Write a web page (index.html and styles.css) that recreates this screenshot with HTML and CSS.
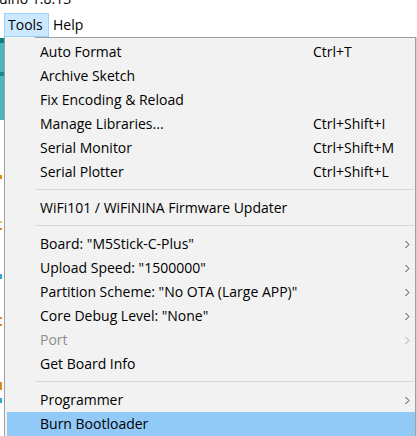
FILE: index.html
```html
<!DOCTYPE html>
<html>
<head>
<meta charset="utf-8">
<link rel="stylesheet" href="styles.css">
</head>
<body>
<div class="title"><span class="title-text">uino 1.8.13</span></div>
<div class="menubar">
  <span class="mb-item active">Tools</span>
  <span class="mb-item">Help</span>
</div>
<div class="stage">
  <div class="edge">
    <div class="teal-dark"></div>
    <div class="teal a"></div>
    <div class="teal-band"></div>
    <div class="teal b"></div>
    <div class="speck orange s1"></div>
    <div class="speck yellow s2"></div>
    <div class="speck orange s3"></div>
    <div class="speck cyan s4"></div>
    <div class="speck orange s5"></div>
    <div class="speck orange s6"></div>
    <div class="speck orange s7"></div>
    <div class="speck cyan s8"></div>
  </div>
  <div class="popup">
    <div class="topline"></div>
    <div class="items">
      <div class="row"><span class="label">Auto Format</span><span class="sc">Ctrl+T</span><span></span></div>
      <div class="row"><span class="label">Archive Sketch</span><span class="sc"></span><span></span></div>
      <div class="row"><span class="label">Fix Encoding &amp; Reload</span><span class="sc"></span><span></span></div>
      <div class="row"><span class="label">Manage Libraries...</span><span class="sc">Ctrl+Shift+I</span><span></span></div>
      <div class="row"><span class="label">Serial Monitor</span><span class="sc">Ctrl+Shift+M</span><span></span></div>
      <div class="row"><span class="label">Serial Plotter</span><span class="sc">Ctrl+Shift+L</span><span></span></div>
      <div class="sep"></div>
      <div class="row"><span class="label">WiFi101 / WiFiNINA Firmware Updater</span><span class="sc"></span><span></span></div>
      <div class="sep"></div>
      <div class="row"><span class="label">Board: "M5Stick-C-Plus"</span><span class="sc"></span><svg class="chev" width="6" height="9" viewBox="0 0 6 9"><path d="M1.5 1 L5 4.5 L1.5 8"/></svg></div>
      <div class="row"><span class="label">Upload Speed: "1500000"</span><span class="sc"></span><svg class="chev" width="6" height="9" viewBox="0 0 6 9"><path d="M1.5 1 L5 4.5 L1.5 8"/></svg></div>
      <div class="row"><span class="label">Partition Scheme: "No OTA (Large APP)"</span><span class="sc"></span><svg class="chev" width="6" height="9" viewBox="0 0 6 9"><path d="M1.5 1 L5 4.5 L1.5 8"/></svg></div>
      <div class="row"><span class="label">Core Debug Level: "None"</span><span class="sc"></span><svg class="chev" width="6" height="9" viewBox="0 0 6 9"><path d="M1.5 1 L5 4.5 L1.5 8"/></svg></div>
      <div class="row disabled"><span class="label">Port</span><span class="sc"></span><svg class="chev" width="6" height="9" viewBox="0 0 6 9"><path d="M1.5 1 L5 4.5 L1.5 8"/></svg></div>
      <div class="row"><span class="label">Get Board Info</span><span class="sc"></span><span></span></div>
      <div class="sep"></div>
      <div class="row"><span class="label">Programmer</span><span class="sc"></span><svg class="chev" width="6" height="9" viewBox="0 0 6 9"><path d="M1.5 1 L5 4.5 L1.5 8"/></svg></div>
      <div class="row hl"><span class="label">Burn Bootloader</span><span class="sc"></span><span></span></div>
    </div>
  </div>
</div>
</body>
</html>
```

FILE: styles.css
```css
html, body {
  margin: 0;
  padding: 0;
  background: #ffffff;
  height: 436px;
  overflow: hidden;
}
body {
  font-family: "Open Sans", "Noto Sans", sans-serif;
  font-size: 14px;
  color: #000;
}
.title {
  height: 13px;
  overflow: hidden;
  display: flex;
  align-items: flex-start;
}
.title-text {
  display: block;
  line-height: 14px;
  margin-top: -8px;
  margin-left: -1px;
  white-space: nowrap;
}
.menubar {
  height: 24px;
  display: flex;
  padding-left: 4px;
  align-items: stretch;
}
.mb-item {
  box-sizing: border-box;
  line-height: 22px;
  padding: 0 3px;
  border: 1px solid transparent;
}
.mb-item.active {
  width: 45px;
  background: #cce8ff;
  border-color: #99d1ff;
}
.stage {
  display: flex;
  height: 399px;
}
.edge {
  width: 4px;
  display: flex;
  flex-direction: column;
  flex: none;
}
.teal-dark { height: 5px; background: #0d7f83; margin-top: 1px; }
.teal { background: #4db5b9; }
.teal.a { height: 29px; }
.teal-band { height: 4px; background: #138b8f; }
.teal.b { height: 44px; }
.speck { width: 2px; height: 2px; }
.orange { background: #e08a1e; }
.yellow { background: #e6c34a; }
.cyan { background: #2aa6d8; }
.s1 { margin-top: 55px; height: 4px; }
.s2 { margin-top: 42px; }
.s3 { margin-top: 5px; }
.s4 { margin-top: 44px; height: 5px; }
.s5 { margin-top: 38px; }
.s6 { margin-top: 5px; }
.s7 { margin-top: 56px; height: 8px; }
.s8 { margin-top: 8px; height: 5px; }
.popup {
  flex: 0 0 412px;
  box-sizing: border-box;
  background: #f2f2f2;
  border-left: 1px solid #a0a0a0;
  border-right: 1px solid #a0a0a0;
  box-shadow: 1px 0 0 #d0d0d0;
}
.topline {
  height: 1px;
  margin-left: 30px;
  background: #a0a0a0;
}
.items {
  padding-top: 2px;
  margin-left: 2px;
}
.row {
  display: grid;
  grid-template-columns: 273px 1fr 6px;
  align-items: center;
  height: 24px;
  line-height: 24px;
  padding: 0 5px 0 33px;
  white-space: nowrap;
}
.row.hl {
  background: #91c9f7;
}
.row.disabled {
  color: #8d8d8d;
}
.chev {
  display: block;
}
.chev path {
  fill: none;
  stroke: #404040;
  stroke-width: 1;
}
.row.disabled .chev path {
  stroke: #a8a8a8;
}
.sep {
  height: 1px;
  background: #d7d7d7;
  margin: 5px 1px 6px 28px;
}
```
